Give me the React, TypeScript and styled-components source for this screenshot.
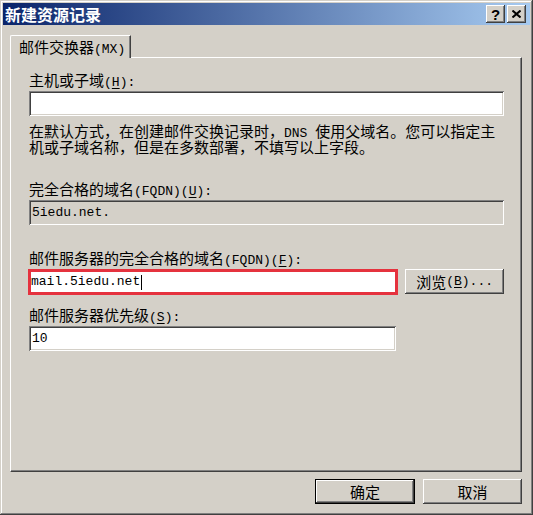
import React from "react";
import styled, { createGlobalStyle } from "styled-components";

const Global = createGlobalStyle`
  html, body { margin: 0; padding: 0; background: #D4D0C8; }
  body { width: 533px; height: 515px; overflow: hidden; }
`;

const CJK = `"Noto Sans CJK SC", "Noto Sans", sans-serif`;

const Window = styled.div`
  width: 533px;
  height: 515px;
  box-sizing: border-box;
  padding: 3px;
  background: #D4D0C8;
  box-shadow: inset -1px -1px #404040, inset 1px 1px #D4D0C8,
    inset -2px -2px #808080, inset 2px 2px #FFFFFF;
  display: flex;
  flex-direction: column;
  font-family: ${CJK};
  font-size: 15px;
  line-height: 16px;
  color: #000;
`;

const TitleBar = styled.div`
  height: 22px;
  flex: none;
  display: flex;
  align-items: center;
  padding: 0 4px 0 2px;
  background: linear-gradient(to right, #0A246A, #A6CAF0);
`;

const Title = styled.div`
  flex: 1;
  color: #fff;
  font-weight: bold;
  font-size: 16px;
  line-height: 18px;
`;

const CaptionButtons = styled.div`
  display: flex;
  gap: 2px;
`;

const CaptionButton = styled.div`
  width: 19px;
  height: 18px;
  box-sizing: border-box;
  background: #D4D0C8;
  box-shadow: inset -1px -1px #404040, inset 1px 1px #FFFFFF,
    inset -2px -2px #808080, inset 2px 2px #D4D0C8;
  display: flex;
  align-items: center;
  justify-content: center;
  font-family: "Liberation Sans", sans-serif;
  font-weight: bold;
  font-size: 15px;
  line-height: 1;
  color: #000;
`;

const Body = styled.div`
  flex: 1;
  display: flex;
  flex-direction: column;
  padding: 10px 8px 0 7px;
`;

const TabStrip = styled.div`
  display: flex;
  height: 22px;
  flex: none;
`;

const Tab = styled.div`
  position: relative;
  z-index: 1;
  box-sizing: border-box;
  width: 121px;
  height: 23px;
  background: #D4D0C8;
  border-top: 1px solid #FFFFFF;
  border-left: 1px solid #FFFFFF;
  border-right: 1px solid #404040;
  border-top-left-radius: 2px;
  box-shadow: inset -1px 0 #808080;
  padding: 3px 0 0 8px;
  white-space: nowrap;
`;

const Panel = styled.div`
  box-sizing: border-box;
  height: 415px;
  flex: none;
  border-top: 1px solid #FFFFFF;
  border-left: 1px solid #FFFFFF;
  border-right: 1px solid #404040;
  border-bottom: 1px solid #404040;
  box-shadow: inset -1px -1px #808080;
  padding: 14px 17px 0 18px;
  display: flex;
  flex-direction: column;
`;

const Label = styled.div<{ $mt?: number }>`
  height: 16px;
  line-height: 16px;
  white-space: nowrap;
  margin-top: ${(p) => p.$mt ?? 0}px;
  margin-bottom: 3px;
`;

const Field = styled.div<{ $width?: number; $readOnly?: boolean }>`
  box-sizing: border-box;
  height: 25px;
  width: ${(p) => (p.$width ? `${p.$width}px` : "100%")};
  flex: none;
  background: ${(p) => (p.$readOnly ? "#D4D0C8" : "#FFFFFF")};
  box-shadow: inset 1px 1px #808080, inset -1px -1px #FFFFFF,
    inset 2px 2px #404040, inset -2px -2px #D4D0C8;
  padding: 0 3px;
  display: flex;
  align-items: center;
  white-space: nowrap;
`;

const HighlightField = styled.div`
  box-sizing: border-box;
  height: 26px;
  width: 371px;
  margin-left: -1px;
  border: 3px solid #E5323E;
  background: #FFFFFF;
  display: flex;
  align-items: center;
  white-space: nowrap;
`;

const Row = styled.div`
  display: flex;
  align-items: flex-start;
  gap: 7px;
`;

const Desc = styled.div`
  margin-top: 7px;
  height: 32px;
  line-height: 16px;
`;

const Ascii = styled.span`
  font-family: "Liberation Mono", monospace;
  font-size: 13px;
  line-height: 0;
`;

const Key = styled.span`
  text-decoration: underline;
  text-underline-offset: 2px;
`;

const Caret = styled.span`
  display: inline-block;
  width: 1px;
  height: 15px;
  background: #000;
  margin-left: 1px;
`;

const Button = styled.div<{ $default?: boolean; $width?: number }>`
  box-sizing: border-box;
  width: ${(p) => p.$width ?? 100}px;
  height: 25px;
  background: #D4D0C8;
  border: 1px solid ${(p) => (p.$default ? "#000000" : "transparent")};
  box-shadow: ${(p) =>
    p.$default
      ? "inset -1px -1px #404040, inset 1px 1px #FFFFFF, inset -2px -2px #808080"
      : "inset -1px -1px #404040, inset 1px 1px #FFFFFF, inset -2px -2px #808080, inset 2px 2px #D4D0C8"};
  display: flex;
  align-items: center;
  justify-content: center;
  white-space: nowrap;
`;

const PlainButton = styled(Button)`
  border: none;
`;

const Footer = styled.div`
  display: flex;
  justify-content: flex-end;
  gap: 8px;
  margin-top: 7px;
`;

export default function App() {
  return (
    <>
      <Global />
      <Window>
        <TitleBar>
          <Title>新建资源记录</Title>
          <CaptionButtons>
            <CaptionButton>?</CaptionButton>
            <CaptionButton>
              <svg width="9" height="8" viewBox="0 0 9 8">
                <path d="M0.5 0.5 L8.5 7.5 M8.5 0.5 L0.5 7.5" stroke="#000" strokeWidth="2" />
              </svg>
            </CaptionButton>
          </CaptionButtons>
        </TitleBar>
        <Body>
          <TabStrip>
            <Tab>
              邮件交换器<Ascii>(MX)</Ascii>
            </Tab>
          </TabStrip>
          <Panel>
            <Label>
              主机或子域<Ascii>(<Key>H</Key>):</Ascii>
            </Label>
            <Field />
            <Desc>
              在默认方式，在创建邮件交换记录时，<Ascii>DNS </Ascii>使用父域名。您可以指定主机或子域名称，但是在多数部署，不填写以上字段。
            </Desc>
            <Label $mt={26}>
              完全合格的域名<Ascii>(FQDN)(<Key>U</Key>):</Ascii>
            </Label>
            <Field $readOnly>
              <Ascii>5iedu.net.</Ascii>
            </Field>
            <Label $mt={25}>
              邮件服务器的完全合格的域名<Ascii>(FQDN)(<Key>F</Key>):</Ascii>
            </Label>
            <Row>
              <HighlightField>
                <Ascii>mail.5iedu.net</Ascii>
                <Caret />
              </HighlightField>
              <PlainButton $width={99}>
                浏览<Ascii>(<Key>B</Key>)...</Ascii>
              </PlainButton>
            </Row>
            <Label $mt={12}>
              邮件服务器优先级<Ascii>(<Key>S</Key>):</Ascii>
            </Label>
            <Field $width={367}>
              <Ascii>10</Ascii>
            </Field>
          </Panel>
          <Footer>
            <Button $default>确定</Button>
            <PlainButton $width={99}>取消</PlainButton>
          </Footer>
        </Body>
      </Window>
    </>
  );
}
